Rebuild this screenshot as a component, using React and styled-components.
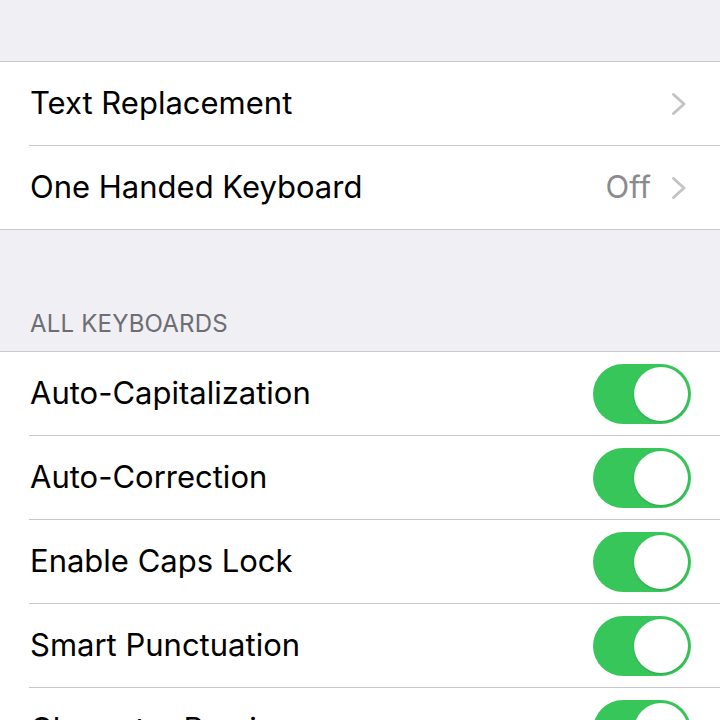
import styled, { createGlobalStyle } from 'styled-components';

const GlobalStyle = createGlobalStyle`
    html, body {
        margin: 0;
        padding: 0;
        background: #efeff4;
    }
    body {
        font-family: Inter, "Noto Sans", sans-serif;
        -webkit-font-smoothing: antialiased;
    }
`;

const Page = styled.div`
    width: 720px;
    height: 720px;
    overflow: hidden;
    background: #efeff4;
    padding-top: 61px;
    box-sizing: border-box;
`;

const Group = styled.div`
    background: #ffffff;
    border-top: 1px solid #c8c7cc;
    border-bottom: 1px solid #c8c7cc;
`;

const Row = styled.div`
    padding-left: 29px;
    &:last-child > div {
        border-bottom: none;
    }
`;

const RowInner = styled.div`
    display: flex;
    align-items: center;
    height: 83px;
    padding-right: ${(props) => (props.$toggle ? 29 : 33)}px;
    border-bottom: 1px solid #c8c7cc;
`;

const Label = styled.div`
    flex: 1;
    font-size: 31px;
    line-height: 36px;
    color: #000000;
    padding-left: 1px;
    margin-top: -2px;
`;

const Value = styled.div`
    font-size: 31px;
    line-height: 36px;
    color: #8a8a8e;
    margin-right: 20px;
    margin-top: -2px;
`;

const Spacer = styled.div`
    height: ${(props) => props.h}px;
`;

const Header = styled.div`
    padding: 0 0 13px 30px;
    font-size: 24px;
    color: #6d6d72;
    letter-spacing: 0.2px;
    margin-top: 79px;
`;

const Track = styled.div`
    width: 98px;
    height: 60px;
    border-radius: 30px;
    background: #37c65a;
    position: relative;
`;

const Knob = styled.div`
    position: absolute;
    top: 3px;
    right: 3px;
    width: 54px;
    height: 54px;
    border-radius: 50%;
    background: #ffffff;
    box-shadow: 0 1px 2px rgba(0, 0, 0, 0.18);
`;

function Chevron() {
    return (
        <svg width="16" height="24" viewBox="0 0 16 24">
            <path
                d="M2.5 2.5 L13 12 L2.5 21.5"
                fill="none"
                stroke="#c4c4c7"
                strokeWidth="3"
                strokeLinecap="round"
                strokeLinejoin="round"
            />
        </svg>
    );
}

function Toggle() {
    return (
        <Track>
            <Knob />
        </Track>
    );
}

const linkRows = [
    { label: 'Text Replacement' },
    { label: 'One Handed Keyboard', value: 'Off' },
];

const toggleRows = [
    'Auto-Capitalization',
    'Auto-Correction',
    'Enable Caps Lock',
    'Smart Punctuation',
    'Character Preview',
];

export default function App() {
    return (
        <Page>
            <GlobalStyle />
            <Group>
                {linkRows.map((row) => (
                    <Row key={row.label}>
                        <RowInner>
                            <Label>{row.label}</Label>
                            {row.value && <Value>{row.value}</Value>}
                            <Chevron />
                        </RowInner>
                    </Row>
                ))}
            </Group>
            <Header>ALL KEYBOARDS</Header>
            <Group>
                {toggleRows.map((label) => (
                    <Row key={label}>
                        <RowInner $toggle>
                            <Label>{label}</Label>
                            <Toggle />
                        </RowInner>
                    </Row>
                ))}
            </Group>
            <Spacer h={40} />
        </Page>
    );
}
